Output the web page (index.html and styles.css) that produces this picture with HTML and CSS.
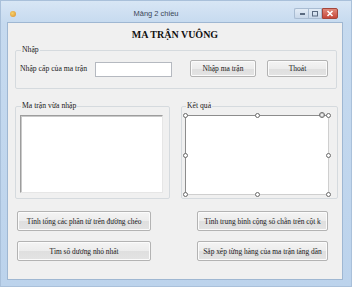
FILE: index.html
```html
<!DOCTYPE html>
<html lang="vi">
<head>
<meta charset="utf-8">
<title>Mảng 2 chiều</title>
<link rel="stylesheet" href="styles.css">
</head>
<body>
<div class="window">
  <div class="titlebar">
    <span class="app-icon"></span>
    <span class="title">Mảng 2 chiều</span>
    <div class="caption-btns">
      <span class="cbtn cbtn-min"><svg width="8" height="5" viewBox="0 0 8 5"><rect x="2" y="2" width="5" height="2" fill="#5a6a80"/></svg></span>
      <span class="cbtn cbtn-max"><svg width="8" height="6" viewBox="0 0 8 6"><rect x="1.5" y="0.5" width="5" height="4.5" fill="none" stroke="#5a6a80"/></svg></span>
      <span class="cbtn cbtn-close"><svg width="8" height="7" viewBox="0 0 8 7"><path d="M1.5 1 L6.5 6 M6.5 1 L1.5 6" stroke="#fff" stroke-width="1.6"/></svg></span>
    </div>
  </div>
  <div class="client">
    <h1 class="heading">MA TRẬN VUÔNG</h1>
    <fieldset class="group group-input">
      <legend>Nhập</legend>
      <div class="input-row">
        <label class="lbl">Nhập cấp của ma trận</label>
        <div class="textbox"></div>
        <button class="btn btn-enter">Nhập ma trận</button>
        <button class="btn btn-exit">Thoát</button>
      </div>
    </fieldset>
    <div class="panels">
      <fieldset class="group panel-left">
        <legend>Ma trận vừa nhập</legend>
        <div class="matrix-box"></div>
      </fieldset>
      <fieldset class="group panel-right">
        <legend>Kết quả</legend>
        <div class="result-box">
          <span class="handle h-tl"></span>
          <span class="handle h-tc"></span>
          <span class="handle h-tr"></span>
          <span class="handle h-ml"></span>
          <span class="handle h-mr"></span>
          <span class="handle h-bl"></span>
          <span class="handle h-bc"></span>
          <span class="handle h-br"></span>
          <span class="smart-tag"></span>
        </div>
      </fieldset>
    </div>
    <div class="actions">
      <button class="btn">Tính tổng các phần tử trên đường chéo</button>
      <button class="btn">Tính trung bình cộng số chẵn trên cột k</button>
      <button class="btn">Tìm số dương nhỏ nhất</button>
      <button class="btn">Sắp xếp từng hàng của ma trận tăng dần</button>
    </div>
  </div>
</div>
</body>
</html>
```
FILE: styles.css
```css
html, body {
  margin: 0;
  padding: 0;
}
body {
  width: 352px;
  height: 287px;
  overflow: hidden;
  font-family: "Liberation Serif", "Times New Roman", serif;
  font-size: 7.7px;
  color: #1a1a1a;
}
.window {
  width: 352px;
  height: 287px;
  box-sizing: border-box;
  display: flex;
  flex-direction: column;
  background: linear-gradient(#d8e6f5 0px, #c6daef 22px, #bcd3ec 100%);
  border: 1px solid #a9c0da;
}
.titlebar {
  height: 21px;
  display: flex;
  align-items: center;
  padding-left: 9px;
}
.app-icon {
  width: 6px;
  height: 6px;
  border-radius: 50%;
  background: radial-gradient(circle at 40% 40%, #f7d36b, #d98a2a);
  margin-top: 4px;
}
.title {
  flex: 1;
  text-align: center;
  font-family: "Liberation Sans", Arial, sans-serif;
  font-size: 7.5px;
  color: #3a4658;
  padding-left: 2px;
  margin-top: 4px;
}
.caption-btns {
  display: flex;
  align-self: flex-start;
  margin-top: 7px;
  margin-right: 13px;
}
.cbtn {
  height: 11px;
  display: flex;
  align-items: center;
  justify-content: center;
  box-sizing: border-box;
}
.cbtn-min, .cbtn-max {
  width: 14px;
  background: linear-gradient(#e3ecf6, #c9d8ea);
  border: 1px solid #a9bcd2;
}
.cbtn-min {
  border-radius: 2px 0 0 2px;
  border-right: none;
}
.cbtn-close {
  width: 16px;
  background: linear-gradient(#e08a7c, #c7473a);
  border: 1px solid #a4463b;
  border-radius: 0 2px 2px 0;
}
.client {
  flex: 1;
  margin: 0 8px 6px 6px;
  background: #f0f0f0;
  border: 1px solid #9fb7d2;
  padding: 0 0 0 7px;
  box-sizing: border-box;
}
.heading {
  margin: 0 0 3px 0;
  padding-top: 5px;
  font-size: 10px;
  line-height: 14px;
  font-weight: bold;
  text-align: center;
  color: #111;
  padding-right: 7px;
}
.group {
  margin: 0;
  border: 1px solid #d5dade;
  border-radius: 2px;
  min-width: 0;
  box-sizing: border-box;
}
.group legend {
  padding: 0 1px;
  margin-left: 1px;
  line-height: 10px;
  font-size: 7.7px;
  color: #1a1a1a;
}
.group-input {
  width: 322px;
  padding: 5px 4px 11px 4px;
}
.input-row {
  display: flex;
  align-items: center;
  height: 17px;
}
.lbl {
  width: 75px;
  flex: none;
  white-space: nowrap;
}
.textbox {
  width: 77px;
  height: 15px;
  box-sizing: border-box;
  background: #fff;
  border: 1px solid #b5b9c0;
  margin-top: 2px;
}
.btn {
  font-family: "Liberation Serif", "Times New Roman", serif;
  font-size: 7.4px;
  color: #1a1a1a;
  padding: 0;
  margin: 0;
  white-space: nowrap;
  box-sizing: border-box;
  border: 1px solid #b3b3b3;
  border-radius: 2px;
  background: linear-gradient(#f4f4f4 0%, #ececec 50%, #dfdfdf 51%, #e3e3e3 100%);
  box-shadow: inset 0 0 0 1px #fbfbfb;
}
.btn-enter {
  width: 66px;
  height: 17px;
  margin-left: 18px;
  font-size: 7.5px;
}
.btn-exit {
  width: 61px;
  height: 17px;
  margin-left: 11px;
  font-size: 7.5px;
}
.panels {
  display: flex;
  gap: 11px;
  margin-top: 12px;
}
.panel-left {
  width: 155px;
  padding: 4px 6px 5px 4px;
}
.panel-right {
  width: 157px;
  padding: 4px 3px 3px 3px;
}
.matrix-box {
  width: 143px;
  height: 78px;
  box-sizing: border-box;
  background: #fff;
  border-top: 1px solid #9d9d9d;
  border-left: 1px solid #9d9d9d;
  border-right: 1px solid #e6e6e6;
  border-bottom: 1px solid #e6e6e6;
  box-shadow: inset 1px 1px 0 #c9c9c9;
}
.result-box {
  position: relative;
  width: 144px;
  height: 80px;
  box-sizing: border-box;
  background: #fff;
  border-top: 1px solid #8c8c8c;
  border-left: 1px solid #8c8c8c;
  border-right: 1px solid #cfcfcf;
  border-bottom: 1px solid #cfcfcf;
}
.handle {
  position: absolute;
  width: 5px;
  height: 5px;
  box-sizing: border-box;
  border: 1px solid #6b6b6b;
  border-radius: 50%;
  background: #fff;
}
.h-tl { left: -3px; top: -3px; }
.h-tc { left: 69px; top: -3px; }
.h-tr { right: -3px; top: -3px; }
.h-ml { left: -3px; top: 37px; }
.h-mr { right: -3px; top: 37px; }
.h-bl { left: -3px; bottom: -3px; }
.h-bc { left: 69px; bottom: -3px; }
.h-br { right: -3px; bottom: -3px; }
.smart-tag {
  position: absolute;
  right: 3px;
  top: -4px;
  width: 6px;
  height: 6px;
  box-sizing: border-box;
  border: 1px solid #6b6b6b;
  border-radius: 50%;
  background: #fff;
  box-shadow: inset 0 0 0 1px #bbb;
}
.actions {
  display: grid;
  grid-template-columns: 134px 131px;
  grid-auto-rows: 20px;
  column-gap: 46px;
  row-gap: 10px;
  margin-top: 12px;
  padding-left: 2px;
}
.actions .btn {
  height: 20px;
}
```
